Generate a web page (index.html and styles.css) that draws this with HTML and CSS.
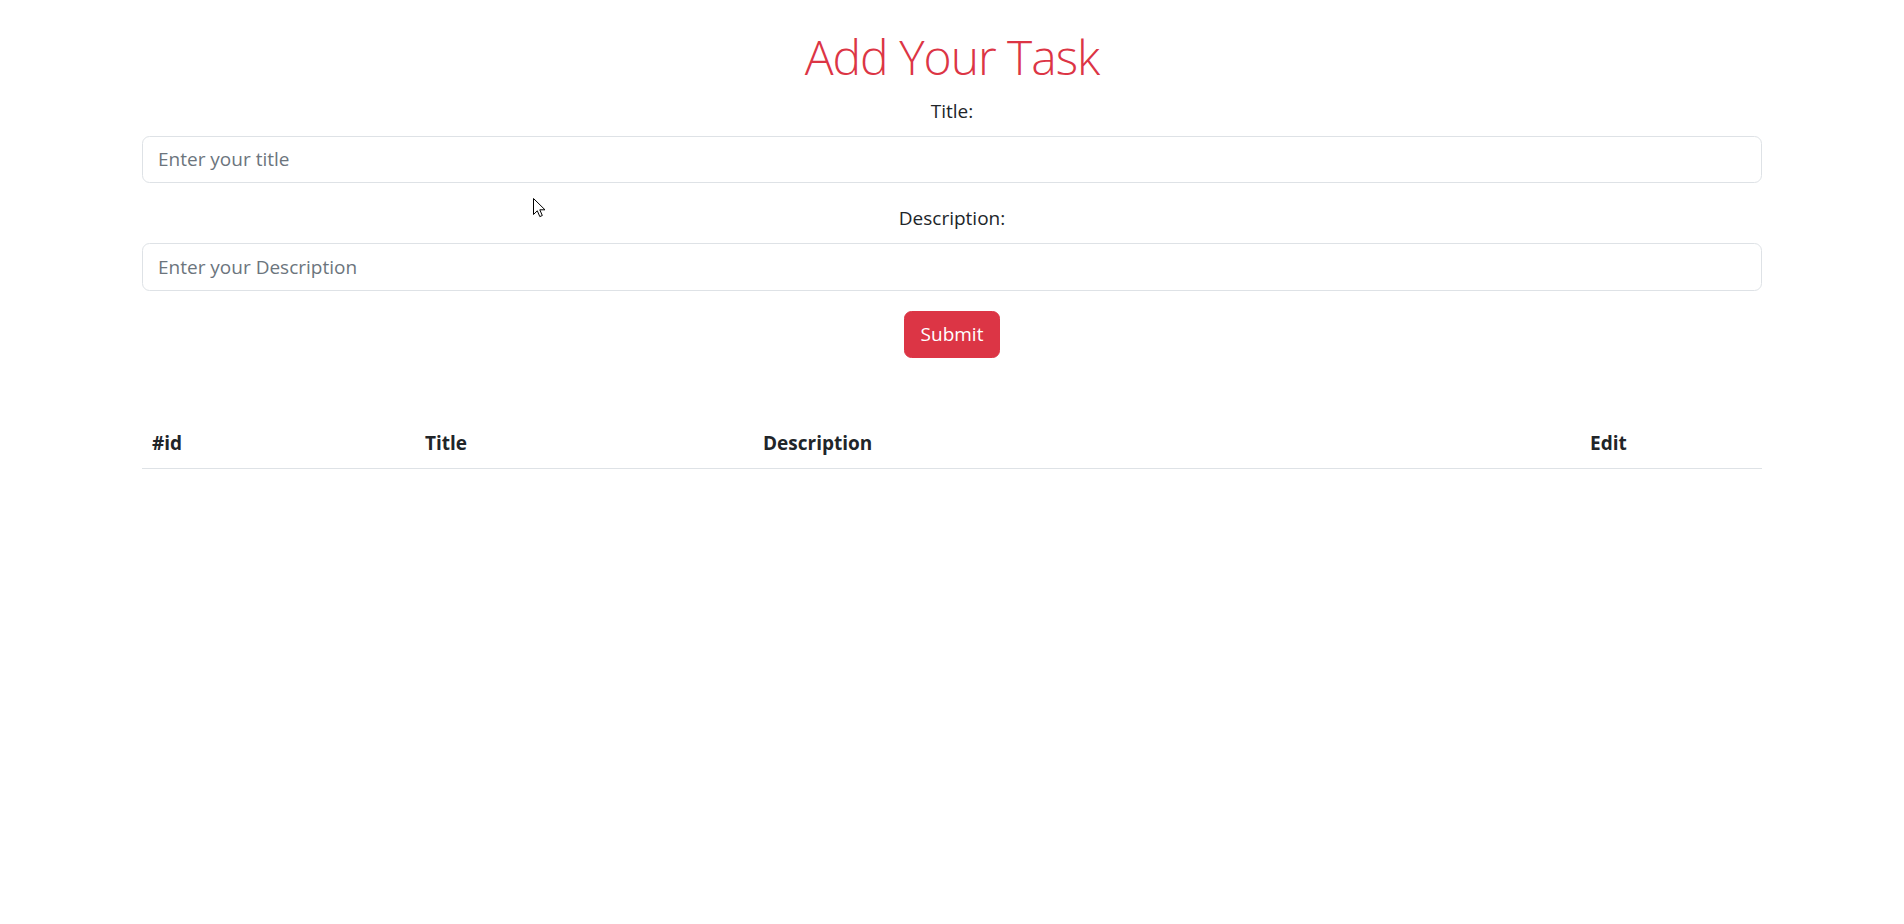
FILE: index.html
```html
<!DOCTYPE html>
<html lang="en">
<head>
<meta charset="utf-8">
<title>Add Your Task</title>
<link rel="stylesheet" href="styles.css">
</head>
<body>
<div class="container">
  <h1 class="heading">Add Your Task</h1>
  <form class="task-form">
    <div class="field">
      <label class="field-label" for="title">Title:</label>
      <input class="field-input" id="title" type="text" placeholder="Enter your title">
    </div>
    <div class="field">
      <label class="field-label" for="desc">Description:</label>
      <input class="field-input" id="desc" type="text" placeholder="Enter your Description">
    </div>
    <div class="actions">
      <button class="btn-submit" type="button">Submit</button>
    </div>
  </form>
  <table class="task-table">
    <thead>
      <tr>
        <th class="col-id">#id</th>
        <th class="col-title">Title</th>
        <th class="col-desc">Description</th>
        <th class="col-edit">Edit</th>
      </tr>
    </thead>
    <tbody></tbody>
  </table>
</div>
<svg class="cursor" width="13" height="20" viewBox="0 0 13 20" xmlns="http://www.w3.org/2000/svg">
  <path d="M0.5 0.5 L0.5 16.5 L4.3 12.8 L6.8 18.6 L9.3 17.5 L6.8 11.8 L12 11.8 Z" fill="#fff" stroke="#000" stroke-width="1" stroke-linejoin="miter"/>
</svg>
</body>
</html>
```

FILE: styles.css
```css
* { box-sizing: border-box; }

html, body {
  margin: 0;
  padding: 0;
  background: #fff;
}

body {
  font-family: "Open Sans", "Noto Sans", "Liberation Sans", sans-serif;
  font-size: 20px;
  line-height: 1.5;
  color: #212529;
}

.container {
  width: 1620px;
  margin: 0 auto;
  padding-top: 25.5px;
}

.heading {
  margin: 0 0 8.5px;
  padding-top: 1.5px;
  text-align: center;
  font-size: 48px;
  font-weight: 300;
  line-height: 60px;
  color: #dc3545;
  letter-spacing: -1px;
}

.task-form {
  display: flex;
  flex-direction: column;
}

.field {
  display: flex;
  flex-direction: column;
  margin-bottom: 20px;
}

.field-label {
  text-align: center;
  margin-bottom: 10px;
  line-height: 30px;
  font-size: 19px;
}

.field-input {
  display: block;
  width: 100%;
  height: 47.5px;
  padding: 7.5px 15px;
  font-family: inherit;
  font-size: 19px;
  color: #212529;
  background: #fff;
  border: 1.25px solid #dee2e6;
  border-radius: 7.5px;
  outline: none;
}

.field-input::placeholder {
  color: #6c757d;
  opacity: 1;
}

.actions {
  display: flex;
  justify-content: center;
}

.btn-submit {
  height: 47.5px;
  width: 96px;
  padding: 7.5px 15px;
  font-family: inherit;
  font-size: 19px;
  line-height: 30px;
  color: #fff;
  background: #dc3545;
  border: 1.25px solid #dc3545;
  border-radius: 7.5px;
  cursor: pointer;
}

.task-table {
  width: 100%;
  margin-top: 60px;
  border-collapse: collapse;
}

.task-table th {
  text-align: left;
  font-weight: 700;
  font-size: 19px;
  line-height: 30px;
  padding: 10px;
  color: #212529;
  border-bottom: 1.25px solid #dee2e6;
}

.col-id { width: 273px; }
.col-title { width: 338px; }
.col-desc { width: 827px; }
.col-edit { width: 182px; }

.cursor {
  position: absolute;
  left: 533px;
  top: 198px;
}
```
